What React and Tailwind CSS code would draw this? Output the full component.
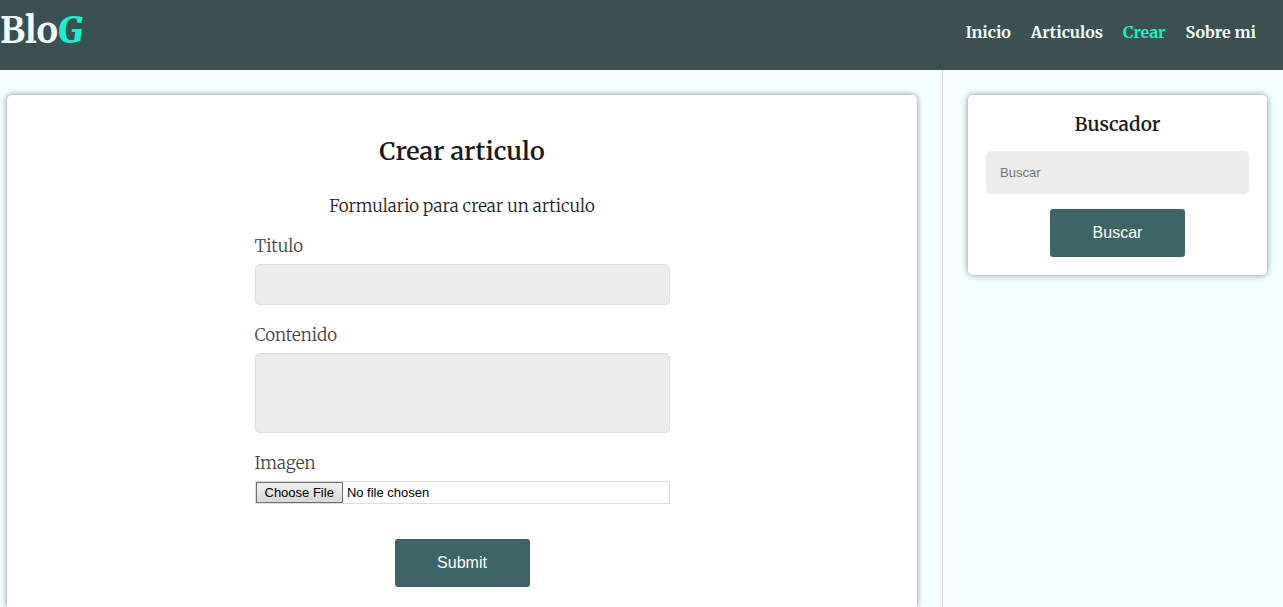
const links = [
  { label: 'Inicio' },
  { label: 'Articulos' },
  { label: 'Crear', active: true },
  { label: 'Sobre mi' },
];

const cardShadow = 'shadow-[0_0_6px_#7f8c8c]';
const serif = "font-['Merriweather','DejaVu_Serif_Condensed','DejaVu_Serif',serif]";
const sans = "font-['Liberation_Sans',Arial,sans-serif]";
const button = `${sans} h-12 w-[135px] rounded-[3px] bg-[#3d6466] text-base text-white`;
const field = `${sans} block w-full rounded-[5px] border border-[#dddddd] bg-[#ececec] px-3 text-[13px] outline-none`;
const label = 'mb-1 block text-[17px] leading-7 font-light';

function Header() {
  return (
    <header className="flex h-[70px] items-start justify-between bg-[#3b5051] pr-[27px] text-[#f4fffe]">
      <a href="#" className="text-4xl leading-[62px] font-bold">
        Blo<span className="font-black text-[#12f5cb] italic">G</span>
      </a>
      <nav className="flex gap-5 text-base leading-[64px] font-bold">
        {links.map((link) => (
          <a key={link.label} href="#" className={link.active ? 'text-[#12f5cb]' : ''}>
            {link.label}
          </a>
        ))}
      </nav>
    </header>
  );
}

function ArticleForm() {
  return (
    <form className="mx-auto w-[415px] max-w-full text-[#444444]" onSubmit={(e) => e.preventDefault()}>
      <label htmlFor="titulo" className={label}>Titulo</label>
      <input id="titulo" type="text" className={`${field} mb-4 h-[41px]`} />
      <label htmlFor="contenido" className={label}>Contenido</label>
      <textarea id="contenido" className={`${field} mb-4 h-20 resize-none py-2`} />
      <label htmlFor="imagen" className={label}>Imagen</label>
      <input
        id="imagen"
        type="file"
        className={`${sans} mb-[35px] block h-[23px] w-full border border-[#dddddd] text-[13px] leading-[19px] text-black file:mr-1 file:h-[21px] file:border file:border-solid file:border-[#707070] file:bg-linear-to-b file:from-[#f0f0f0] file:to-[#d8d8d8] file:px-2 file:text-black`}
      />
      <button type="submit" className={`${button} mx-auto block`}>Submit</button>
    </form>
  );
}

function Search() {
  return (
    <form
      className={`flex flex-col items-center rounded-[5px] bg-white px-[18px] pt-[15px] pb-[18px] ${cardShadow}`}
      onSubmit={(e) => e.preventDefault()}
    >
      <h2 className="mb-[13px] text-[19px] leading-7 font-semibold">
        <label htmlFor="buscar">Buscador</label>
      </h2>
      <input
        id="buscar"
        type="text"
        placeholder="Buscar"
        className={`${sans} mb-[15px] h-[43px] w-full rounded-[5px] bg-[#ececec] px-[14px] text-[13px] outline-none placeholder:text-[#757575]`}
      />
      <button type="submit" className={button}>Buscar</button>
    </form>
  );
}

export default function App() {
  return (
    <div className={`flex min-h-screen flex-col bg-[#f4fffe] text-base text-[#1a1a1a] ${serif}`}>
      <Header />
      <div className="flex flex-1">
        <main className="flex flex-1 flex-col pt-[25px] pr-[25px] pl-[7px]">
          <section className={`flex-1 rounded-t-[5px] bg-white px-6 pt-[38px] pb-5 ${cardShadow}`}>
            <h1 className="mb-[23px] text-center text-[25px] leading-9 font-semibold">Crear articulo</h1>
            <p className="mb-3 text-center text-[17px] leading-7 font-light">Formulario para crear un articulo</p>
            <ArticleForm />
          </section>
        </main>
        <aside className="w-[341px] border-l border-[#dddddd] pt-[25px] pr-4 pl-[25px]">
          <Search />
        </aside>
      </div>
    </div>
  );
}
